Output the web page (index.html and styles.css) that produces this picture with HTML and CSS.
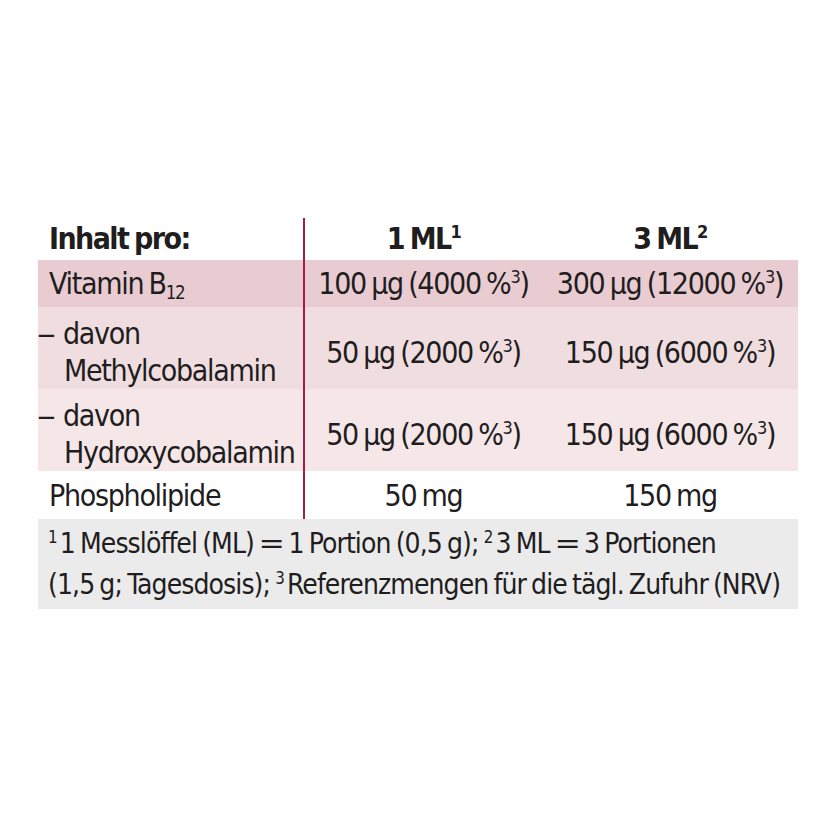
FILE: index.html
```html
<!DOCTYPE html>
<html lang="de">
<head>
<meta charset="utf-8">
<title>Nährwerte</title>
<link rel="stylesheet" href="styles.css">
</head>
<body>
<main class="page">
  <table class="nutri">
    <colgroup>
      <col class="c1"><col class="c2"><col class="c3">
    </colgroup>
    <thead>
      <tr class="head">
        <th class="label">Inhalt pro:</th>
        <th>1 ML<sup>1</sup></th>
        <th>3 ML<sup>2</sup></th>
      </tr>
    </thead>
    <tbody>
      <tr class="r1">
        <td class="label">Vitamin B<sub>12</sub></td>
        <td>100 µg (4000 %<sup>3</sup>)</td>
        <td>300 µg (12000 %<sup>3</sup>)</td>
      </tr>
      <tr class="r2">
        <td class="label sub-item"><span class="dash">–</span>davon Methylcobalamin</td>
        <td>50 µg (2000 %<sup>3</sup>)</td>
        <td>150 µg (6000 %<sup>3</sup>)</td>
      </tr>
      <tr class="r3">
        <td class="label sub-item"><span class="dash">–</span>davon Hydroxycobalamin</td>
        <td>50 µg (2000 %<sup>3</sup>)</td>
        <td>150 µg (6000 %<sup>3</sup>)</td>
      </tr>
      <tr class="r4">
        <td class="label">Phospholipide</td>
        <td>50 mg</td>
        <td>150 mg</td>
      </tr>
    </tbody>
    <tfoot>
      <tr class="foot">
        <td colspan="3"><sup>1</sup>1 Messlöffel (ML) <span class="eq">=</span> 1 Portion (0,5 g); <sup>2</sup>3 ML <span class="eq">=</span> 3 Portionen<br>(1,5 g; Tagesdosis); <sup>3</sup>Referenzmengen für die tägl. Zufuhr (NRV)</td>
      </tr>
    </tfoot>
  </table>
</main>
</body>
</html>
```

FILE: styles.css
```css
html, body {
  margin: 0;
  padding: 0;
  background: #ffffff;
}

.page {
  width: 840px;
  height: 840px;
  box-sizing: border-box;
  padding: 218px 42px 0 38px;
  font-family: "Liberation Sans Narrow", "DejaVu Sans Condensed", "Liberation Sans", sans-serif;
  color: #1f1d1e;
}

.nutri {
  width: 760px;
  border-collapse: collapse;
  table-layout: fixed;
  font-size: 30px;
  line-height: 39px;
  letter-spacing: -1.3px;
  word-spacing: -2px;
}

.c1 { width: 266px; }
.c2 { width: 238px; }
.c3 { width: 256px; }

.nutri th,
.nutri td {
  padding: 0;
  text-align: center;
  vertical-align: middle;
  font-weight: normal;
  white-space: nowrap;
}

.nutri th:first-child,
.nutri tbody td:first-child {
  border-right: 2px solid #a21d4c;
}

.nutri .label {
  text-align: left;
  padding-left: 11px;
}

.head th {
  font-weight: bold;
  height: 42px;
  box-sizing: border-box;
  padding-top: 1px;
  vertical-align: top;
  letter-spacing: -1.6px;
}

.r1 td { height: 47px; background: #e8ccd2; }
.r2 td { height: 82px; background: #f0dde0; }
.r3 td { height: 81px; background: #f5e6e8; }
.r4 td { height: 48px; background: #ffffff; }

.r2 td,
.r3 td {
  box-sizing: border-box;
  padding-top: 8px;
}

.nutri .sub-item {
  white-space: normal;
  line-height: 37px;
  padding-left: 26px;
  text-indent: -27px;
}

.dash {
  display: inline-block;
  width: 26px;
  text-indent: 0;
  letter-spacing: 0;
  transform: scaleX(1.4);
  transform-origin: 0 50%;
}

.foot td {
  background: #ebebeb;
  text-align: left;
  padding: 4px 0 4px 10px;
  font-size: 28px;
  line-height: 41px;
  letter-spacing: -0.9px;
  word-spacing: -2px;
  height: 90px;
  box-sizing: border-box;
}

.eq {
  display: inline-block;
  margin: 0 2px;
  transform: scaleX(1.25);
}

sup {
  font-size: 0.6em;
  line-height: 0;
  vertical-align: 0.6em;
}

.foot sup {
  margin-right: 3px;
}

sub {
  font-size: 0.62em;
  line-height: 0;
  vertical-align: -0.25em;
}
```
